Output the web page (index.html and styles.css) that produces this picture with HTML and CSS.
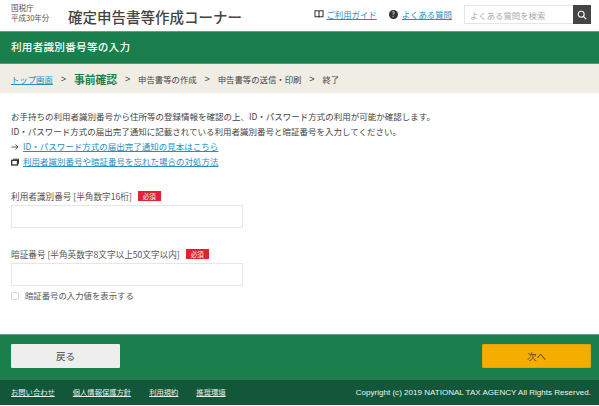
FILE: index.html
```html
<!DOCTYPE html>
<html lang="ja">
<head>
<meta charset="utf-8">
<title>利用者識別番号等の入力</title>
<link rel="stylesheet" href="styles.css">
</head>
<body>
<header class="top">
  <div class="agency"><div>国税庁</div><div>平成30年分</div></div>
  <div class="site-title">確定申告書等作成コーナー</div>
  <nav class="top-nav">
    <svg class="ico-book" viewBox="0 0 12 10" width="10" height="8"><path d="M1 1h3.500q1.200 0 1.500 1q.3-1 1.500-1H11V8.500H7q-.8 0-1 .8q-.2-.8-1-.8H1zM6 2V9" fill="none" stroke="#333" stroke-width="1.300"/></svg>
    <a class="guide" href="#">ご利用ガイド</a>
    <span class="ico-q">?</span>
    <a href="#">よくある質問</a>
  </nav>
  <div class="search">
    <input class="search-input" type="text" placeholder="よくある質問を検索">
    <span class="search-btn"><svg viewBox="0 0 12 12" width="10" height="10"><circle cx="5" cy="5" r="3.600" fill="none" stroke="#fff" stroke-width="1.300"/><path d="M7.700 7.700L11 11" stroke="#fff" stroke-width="1.500"/></svg></span>
  </div>
</header>
<div class="band"><h1>利用者識別番号等の入力</h1></div>
<div class="crumbs">
  <a href="#">トップ画面</a><span class="sep">&gt;</span>
  <strong>事前確認</strong><span class="sep">&gt;</span>
  <span>申告書等の作成</span><span class="sep">&gt;</span>
  <span>申告書等の送信・印刷</span><span class="sep">&gt;</span>
  <span>終了</span>
</div>
<main class="content">
  <p>お手持ちの利用者識別番号から住所等の登録情報を確認の上、ID・パスワード方式の利用が可能か確認します。</p>
  <p>ID・パスワード方式の届出完了通知に記載されている利用者識別番号と暗証番号を入力してください。</p>
  <p class="link-row"><svg class="row-ico" viewBox="0 0 8 8" width="8" height="8"><path d="M.5 4H7M4.500 1.500L7 4L4.500 6.500" fill="none" stroke="#333" stroke-width=".8"/></svg><a href="#">ID・パスワード方式の届出完了通知の見本はこちら</a></p>
  <p class="link-row"><svg class="row-ico" viewBox="0 0 8 8" width="8" height="8"><path d="M2 1.200h5.500v4.500" fill="none" stroke="#333" stroke-width="1"/><rect x=".7" y="2.300" width="5.800" height="4.700" fill="none" stroke="#333" stroke-width="1.300"/></svg><a href="#">利用者識別番号や暗証番号を忘れた場合の対処方法</a></p>
  <div class="field first">
    <label class="field-label">利用者識別番号 [半角数字16桁]<span class="req">必須</span></label>
    <input class="text-input" type="text">
  </div>
  <div class="field second">
    <label class="field-label">暗証番号 [半角英数字8文字以上50文字以内]<span class="req">必須</span></label>
    <input class="text-input" type="text">
  </div>
  <label class="show"><span class="check"></span>暗証番号の入力値を表示する</label>
</main>
<div class="actions">
  <a class="btn back" href="#">戻る</a>
  <a class="btn next" href="#">次へ</a>
</div>
<footer class="foot">
  <a href="#">お問い合わせ</a><a href="#">個人情報保護方針</a><a href="#">利用規約</a><a href="#">推奨環境</a>
  <span class="copy">Copyright (c) 2019 NATIONAL TAX AGENCY All Rights Reserved.</span>
</footer>
</body>
</html>
```

FILE: styles.css
```css
* { box-sizing: border-box; }
html, body { margin: 0; padding: 0; }
body {
  width: 599px;
  height: 406px;
  overflow: hidden;
  background: #fff;
  color: #444;
  font-family: "Noto Sans CJK JP", "Liberation Sans", sans-serif;
  font-size: 8.500px;
}
a { color: #2a8cc4; text-decoration: underline; }
p { margin: 0; }

.top { height: 31px; display: flex; align-items: center; padding: 0 8px 2px 11px; }
.agency { width: 57px; font-size: 7.500px; line-height: 10px; color: #555; margin-top: -3px; }
.site-title { font-size: 14.500px; font-weight: 500; color: #444; margin-top: 4px; }
.top-nav { margin-left: auto; margin-bottom: 1px; display: flex; align-items: center; font-size: 8.400px; }
.ico-book { margin-right: 3px; }
.guide { margin-right: 12px; }
.ico-q { width: 9px; height: 9px; border-radius: 50%; background: #333; color: #fff; font-size: 7px; line-height: 9px; text-align: center; margin-right: 4px; }
.search { display: flex; margin-left: 12px; height: 19px; }
.search-input { width: 109px; height: 19px; border: 1px solid #e6e6e6; border-right: 0; padding: 0 5px; font: 8.400px "Noto Sans CJK JP", sans-serif; outline: 0; }
.search-input::placeholder { color: #aaa; opacity: 1; }
.search-btn { width: 18px; height: 19px; background: #444; display: flex; align-items: center; justify-content: center; }

.band { height: 33px; background: #1a7f4c; border-top: 1px solid #5aa37e; border-bottom: 1px solid #4d9c75; display: flex; align-items: center; padding: 0 11px 2px; }
.band h1 { margin: 0; font-size: 10.600px; font-weight: 500; color: #fff; letter-spacing: .25px; }

.crumbs { height: 29px; background: #f0ede4; display: flex; align-items: center; padding: 1px 11px 0; font-size: 8.400px; color: #444; }
.crumbs a { font-size: 8.400px; }
.crumbs strong { font-size: 10.800px; font-weight: 700; color: #1a7f4c; }
.sep { width: 21px; text-align: center; font-family: "Liberation Sans", sans-serif; font-size: 9px; color: #444; }

.content { height: 241px; padding: 16px 11px 0; font-size: 8.500px; line-height: 15px; }
.link-row { display: flex; align-items: center; }
.row-ico { margin-right: 4px; flex: none; }
.field-label { display: flex; align-items: center; height: 12px; line-height: 12px; font-size: 8.650px; color: #555; }
.first { margin-top: 21px; }
.second { margin-top: 20px; }
.req { width: 23px; height: 10px; background: #e3232c; color: #fff; font-size: 6.500px; line-height: 10px; text-align: center; margin-left: 6px; }
.text-input { display: block; width: 232px; height: 23px; margin-top: 3px; border: 1px solid #e6e6e6; background: #fff; outline: 0; }
.show { display: flex; align-items: center; height: 13px; margin-top: 3px; font-size: 8.400px; color: #555; }
.check { width: 8px; height: 8px; border: 1px solid #d8d8d8; border-radius: 2px; margin-right: 6px; background: #fff; }

.actions { height: 46px; background: #1a7f4c; border-top: 1px solid #5aa37e; display: flex; justify-content: space-between; align-items: flex-start; padding: 9px 8px 0 11px; }
.btn { width: 109px; height: 24px; border-radius: 1px; display: flex; align-items: center; justify-content: center; font-size: 9.500px; color: #444; text-decoration: none; }
.back { background: #eee; }
.next { background: #f5ae00; border: 1px solid #e0a30a; color: #5a4610; }

.foot { height: 25px; background: #12573a; display: flex; align-items: center; padding: 0 8px 1px 11px; font-size: 7.300px; }
.foot a { color: #e6efe9; margin-right: 18px; }
.copy { margin-left: auto; font-family: "Liberation Sans", sans-serif; font-size: 8.050px; color: #eef3ef; }
```
